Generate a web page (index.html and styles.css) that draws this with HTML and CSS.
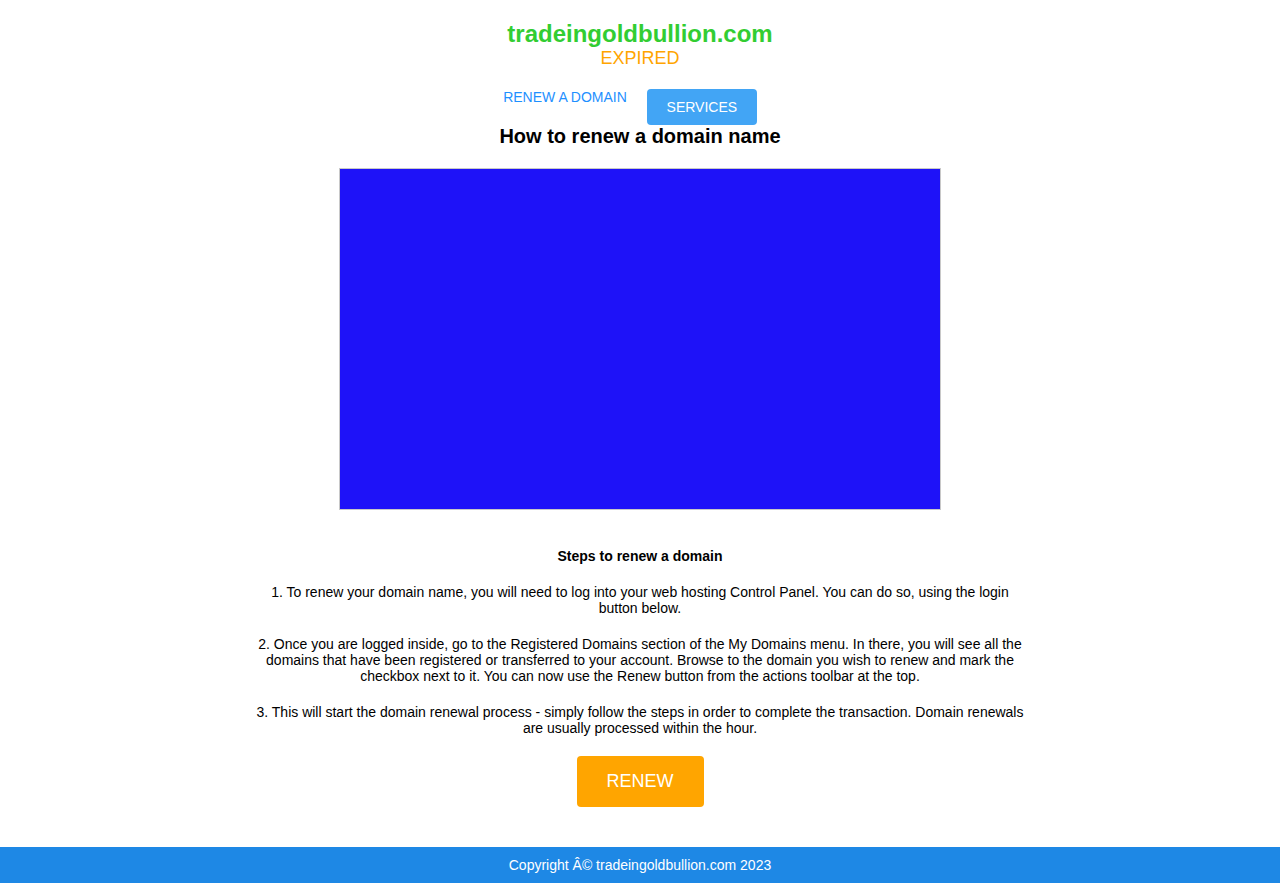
FILE: index.html
```html
<!DOCTYPE html>
<html lang="en">
<head>
<meta charset="utf-8">
<title>tradeingoldbullion.com</title>
<link rel="stylesheet" href="styles.css">
</head>
<body>
<div class="page">
  <header class="header">
    <h1 class="domain">tradeingoldbullion.com</h1>
    <div class="status">EXPIRED</div>
  </header>
  <nav class="nav">
    <a class="nav-link" href="#">RENEW A DOMAIN</a>
    <a class="nav-btn" href="#">SERVICES</a>
  </nav>
  <main class="main">
    <h2 class="title">How to renew a domain name</h2>
    <div class="video"></div>
    <section class="steps">
      <p class="steps-title">Steps to renew a domain</p>
      <p>1. To renew your domain name, you will need to log into your web hosting Control Panel. You can do so, using the login button below.</p>
      <p>2. Once you are logged inside, go to the Registered Domains section of the My Domains menu. In there, you will see all the domains that have been registered or transferred to your account. Browse to the domain you wish to renew and mark the checkbox next to it. You can now use the Renew button from the actions toolbar at the top.</p>
      <p>3. This will start the domain renewal process - simply follow the steps in order to complete the transaction. Domain renewals are usually processed within the hour.</p>
    </section>
    <a class="renew-btn" href="#">RENEW</a>
  </main>
</div>
<footer class="footer">Copyright Â© tradeingoldbullion.com 2023</footer>
</body>
</html>
```
FILE: styles.css
```css
html, body {
  margin: 0;
  padding: 0;
}
body {
  font-family: "Liberation Sans", Arial, sans-serif;
  color: #000;
  background: #fff;
  display: flex;
  flex-direction: column;
  min-height: 883px;
}
.page {
  flex: 1;
  display: flex;
  flex-direction: column;
  align-items: center;
}
.header {
  padding-top: 20px;
  text-align: center;
}
.domain {
  margin: 0;
  font-size: 24px;
  line-height: 28px;
  font-weight: bold;
  color: #32cd32;
}
.status {
  font-size: 18px;
  line-height: 20px;
  color: #ffa500;
}
.nav {
  margin-top: 21px;
  padding-right: 20px;
  display: flex;
  align-items: flex-start;
  gap: 20px;
  height: 36px;
}
.nav-link {
  font-size: 14px;
  line-height: 16px;
  color: #1e90ff;
  text-decoration: none;
}
.nav-btn {
  display: flex;
  align-items: center;
  justify-content: center;
  width: 110px;
  height: 36px;
  border-radius: 4px;
  background: #42a5f5;
  color: #fff;
  font-size: 14px;
  text-decoration: none;
}
.main {
  display: flex;
  flex-direction: column;
  align-items: center;
}
.title {
  margin: 0;
  font-size: 20px;
  line-height: 23px;
  font-weight: bold;
}
.video {
  margin-top: 20px;
  width: 600px;
  height: 340px;
  border: 1px solid #c8c8c8;
  background: #1e12f8;
}
.steps {
  margin-top: 31px;
  width: 770px;
  text-align: center;
  font-size: 14px;
  line-height: 16px;
}
.steps p {
  margin: 0 0 20px;
}
.steps-title {
  font-weight: bold;
  padding-top: 7px;
}
.steps p:last-child {
  margin-bottom: 0;
}
.renew-btn {
  margin-top: 20px;
  width: 127px;
  height: 51px;
  border-radius: 4px;
  background: #ffa500;
  color: #fff;
  font-size: 18px;
  display: flex;
  align-items: center;
  justify-content: center;
  text-decoration: none;
}
.footer {
  height: 36px;
  background: #1e88e5;
  color: #fff;
  font-size: 14px;
  display: flex;
  align-items: center;
  justify-content: center;
}
```
